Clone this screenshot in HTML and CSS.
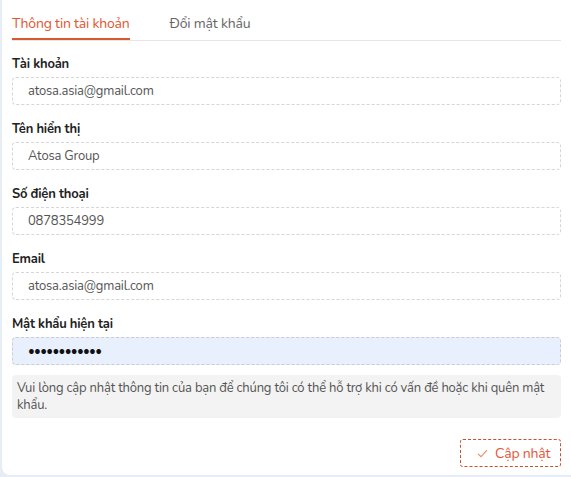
FILE: index.html
```html
<!DOCTYPE html>
<html lang="vi">
<head>
<meta charset="utf-8">
<link rel="stylesheet" href="styles.css">
</head>
<body>
<div class="card">
  <div class="tabs">
    <div class="tab active">Thông tin tài khoản</div>
    <div class="tab">Đổi mật khẩu</div>
  </div>
  <form class="form">
    <div class="field">
      <label class="label">Tài khoản</label>
      <input class="input" type="text" value="atosa.asia@gmail.com" readonly>
    </div>
    <div class="field">
      <label class="label">Tên hiển thị</label>
      <input class="input" type="text" value="Atosa Group" readonly>
    </div>
    <div class="field">
      <label class="label">Số điện thoại</label>
      <input class="input" type="text" value="0878354999" readonly>
    </div>
    <div class="field">
      <label class="label">Email</label>
      <input class="input" type="text" value="atosa.asia@gmail.com" readonly>
    </div>
    <div class="field">
      <label class="label">Mật khẩu hiện tại</label>
      <div class="input input-pass">••••••••••••</div>
    </div>
    <div class="notice">Vui lòng cập nhật thông tin của bạn để chúng tôi có thể hỗ trợ khi có vấn đề hoặc khi quên mật khẩu.</div>
    <div class="actions">
      <button type="button" class="btn">
        <svg class="btn-icon" width="11" height="9" viewBox="0 0 11 9"><path d="M1 4.8 L4 7.6 L10 1.2" fill="none" stroke="#ef8a6a" stroke-width="1.1"/></svg>
        <span>Cập nhật</span>
      </button>
    </div>
  </form>
</div>
</body>
</html>
```
FILE: styles.css
```css
* { box-sizing: border-box; }
html, body { margin: 0; padding: 0; }
body {
  background: #e6edf5;
  font-family: "Nunito", "Lato", "Noto Sans", sans-serif;
  color: #222;
  letter-spacing: -0.2px;
}
.card {
  margin-left: 2px;
  height: 475px;
  background: #fff;
  border-bottom-left-radius: 8px;
  padding: 0 10px;
}
.tabs {
  display: flex;
  border-bottom: 1px solid #e6e6e6;
  height: 41px;
}
.tab {
  font-size: 14px;
  line-height: 20px;
  padding: 14px 0 5px;
  margin-right: 40px;
  color: #666;
  border-bottom: 2px solid transparent;
}
.tab.active {
  color: #e2562f;
  border-bottom-color: #d65a2e;
}
.form { display: flex; flex-direction: column; }
.field {
  display: flex;
  flex-direction: column;
  margin-top: 13px;
}
.field + .field { margin-top: 14px; }
.label {
  font-size: 13px;
  font-weight: 700;
  line-height: 20px;
  color: #222;
  margin-bottom: 3px;
}
.input {
  height: 28px;
  border: 1px dashed #d6d6d6;
  border-radius: 4px;
  padding: 0 15px;
  font-family: inherit;
  font-size: 13px;
  letter-spacing: -0.2px;
  color: #555;
  background: #fff;
  outline: none;
  width: 100%;
}
.input-pass {
  background: #e8f0fe;
  border-color: #c9ccd2;
  display: flex;
  align-items: center;
  color: #111;
  font-size: 13px;
  letter-spacing: -0.7px;
}
.notice {
  margin-top: 10px;
  background: #f3f3f3;
  border-radius: 4px;
  padding: 5px 4px 4px 5px;
  font-size: 13px;
  line-height: 17px;
  color: #555;
}
.actions {
  display: flex;
  justify-content: flex-end;
  margin-top: 21px;
}
.btn {
  display: flex;
  align-items: center;
  gap: 7px;
  height: 28px;
  width: 101px;
  padding: 0 0 0 16px;
  border: 1px dashed #c4532c;
  border-radius: 3px;
  background: #fff;
  font-family: inherit;
  font-size: 14px;
  letter-spacing: -0.2px;
  color: #e0593a;
}
.btn-icon { flex: none; }
```
